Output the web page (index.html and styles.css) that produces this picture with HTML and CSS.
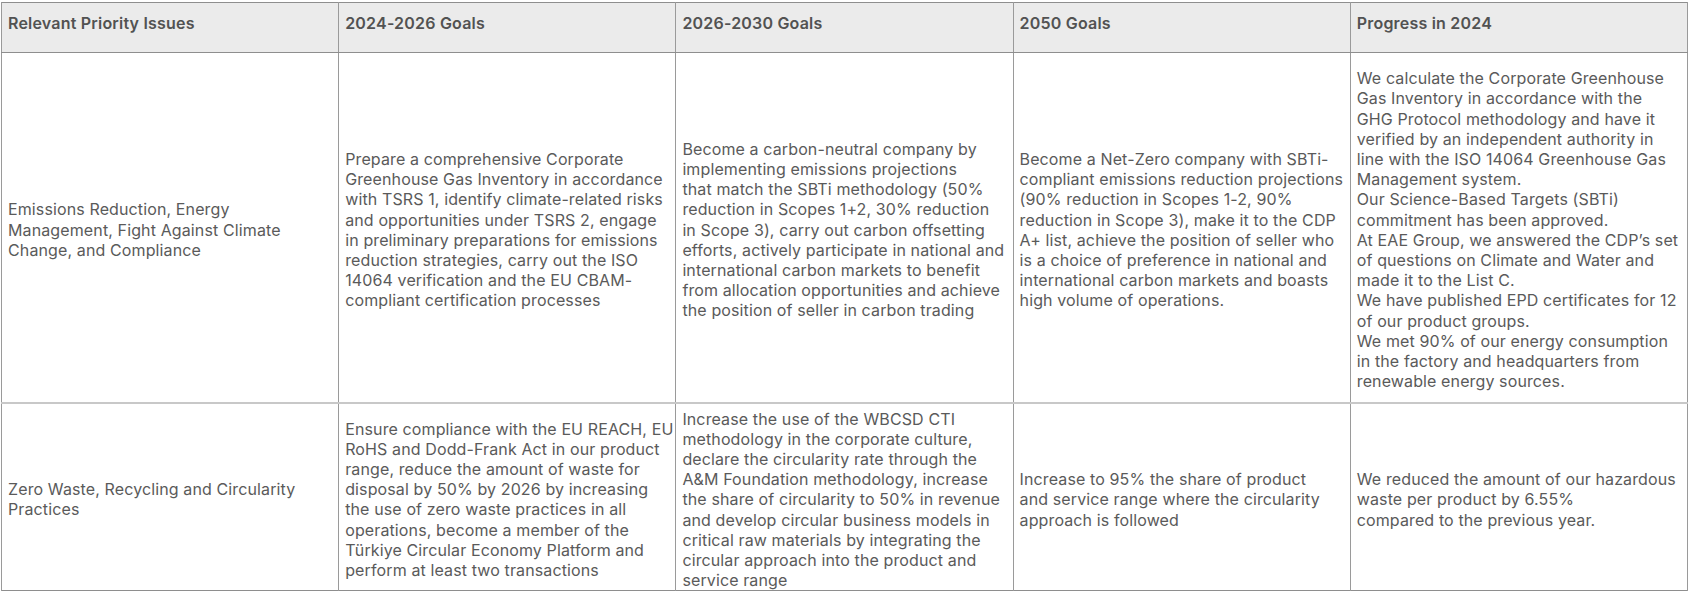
FILE: index.html
```html
<!DOCTYPE html>
<html lang="en">
<head>
<meta charset="utf-8">
<title>Goals</title>
<link rel="stylesheet" href="styles.css">
</head>
<body>
<div class="page">
<table class="goals">
  <thead>
    <tr>
      <th>Relevant Priority Issues</th>
      <th>2024-2026 Goals</th>
      <th>2026-2030 Goals</th>
      <th>2050 Goals</th>
      <th>Progress in 2024</th>
    </tr>
  </thead>
  <tbody>
    <tr class="row-climate">
      <td>Emissions Reduction, Energy<br>Management, Fight Against Climate<br>Change, and Compliance</td>
      <td>Prepare a comprehensive Corporate<br>Greenhouse Gas Inventory in accordance<br>with TSRS 1, identify climate-related risks<br>and opportunities under TSRS 2, engage<br>in preliminary preparations for emissions<br>reduction strategies, carry out the ISO<br>14064 verification and the EU CBAM-<br>compliant certification processes</td>
      <td>Become a carbon-neutral company by<br>implementing emissions projections<br>that match the SBTi methodology (50%<br>reduction in Scopes 1+2, 30% reduction<br>in Scope 3), carry out carbon offsetting<br>efforts, actively participate in national and<br>international carbon markets to benefit<br>from allocation opportunities and achieve<br>the position of seller in carbon trading</td>
      <td>Become a Net-Zero company with SBTi-<br>compliant emissions reduction projections<br>(90% reduction in Scopes 1-2, 90%<br>reduction in Scope 3), make it to the CDP<br>A+ list, achieve the position of seller who<br>is a choice of preference in national and<br>international carbon markets and boasts<br>high volume of operations.</td>
      <td>We calculate the Corporate Greenhouse<br>Gas Inventory in accordance with the<br>GHG Protocol methodology and have it<br>verified by an independent authority in<br>line with the ISO 14064 Greenhouse Gas<br>Management system.<br>Our Science-Based Targets (SBTi)<br>commitment has been approved.<br>At EAE Group, we answered the CDP’s set<br>of questions on Climate and Water and<br>made it to the List C.<br>We have published EPD certificates for 12<br>of our product groups.<br>We met 90% of our energy consumption<br>in the factory and headquarters from<br>renewable energy sources.</td>
    </tr>
    <tr class="row-waste">
      <td>Zero Waste, Recycling and Circularity<br>Practices</td>
      <td>Ensure compliance with the EU REACH, EU<br>RoHS and Dodd-Frank Act in our product<br>range, reduce the amount of waste for<br>disposal by 50% by 2026 by increasing<br>the use of zero waste practices in all<br>operations, become a member of the<br>Türkiye Circular Economy Platform and<br>perform at least two transactions</td>
      <td>Increase the use of the WBCSD CTI<br>methodology in the corporate culture,<br>declare the circularity rate through the<br>A&amp;M Foundation methodology, increase<br>the share of circularity to 50% in revenue<br>and develop circular business models in<br>critical raw materials by integrating the<br>circular approach into the product and<br>service range</td>
      <td>Increase to 95% the share of product<br>and service range where the circularity<br>approach is followed</td>
      <td>We reduced the amount of our hazardous<br>waste per product by 6.55%<br>compared to the previous year.</td>
    </tr>
  </tbody>
</table>
</div>
</body>
</html>
```
FILE: styles.css
```css
html, body {
  margin: 0;
  padding: 0;
  background: #ffffff;
}

.page {
  padding: 2px 1px 0 1px;
}

.goals {
  width: 100%;
  table-layout: fixed;
  border-collapse: collapse;
  font-family: Inter, "Liberation Sans", sans-serif;
  font-size: 16px;
  letter-spacing: 0.12px;
  line-height: 20.2px;
  color: #5a5a5a;
  border: 1px solid #8e8e8e;
}

.goals th {
  height: 50px;
  box-sizing: border-box;
  padding: 10px 6px 0 6px;
  vertical-align: top;
  text-align: left;
  font-weight: 600;
  letter-spacing: 0.2px;
  color: #525252;
  background: #ebebeb;
  border-left: 1px solid #9a9a9a;
  border-right: 1px solid #9a9a9a;
  border-bottom: 1px solid #8e8e8e;
  white-space: nowrap;
}

.goals td {
  padding: 5px 2px 0 6px;
  vertical-align: middle;
  text-align: left;
  border-left: 1px solid #9a9a9a;
  border-right: 1px solid #9a9a9a;
  white-space: nowrap;
  overflow: hidden;
}

.row-climate {
  height: 350px;
}

.row-waste {
  height: 188px;
}

.row-waste td {
  border-top: 2px solid #c8c8c8;
}
```
